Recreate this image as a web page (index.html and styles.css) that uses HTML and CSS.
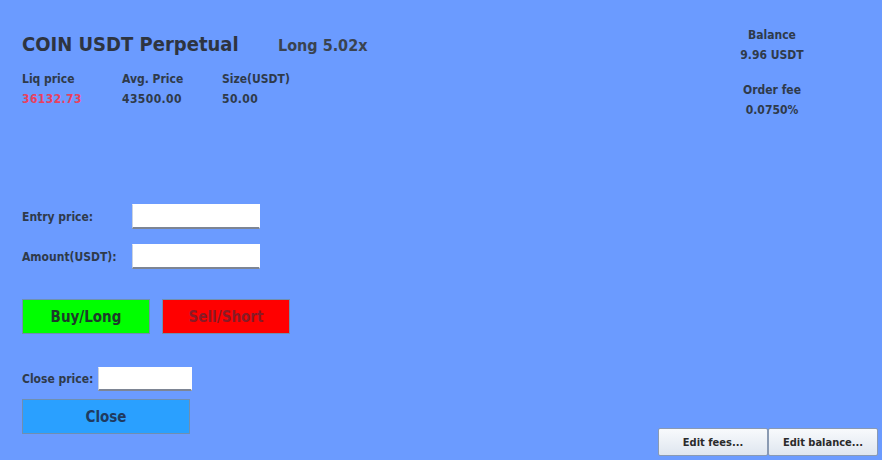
FILE: index.html
```html
<!DOCTYPE html>
<html>
<head>
<meta charset="utf-8">
<link rel="stylesheet" href="styles.css">
</head>
<body>
<div class="app">
  <header class="top">
    <div class="pos">
      <div class="title-row">
        <h1 class="title">COIN USDT Perpetual</h1>
        <span class="side">Long 5.02x</span>
      </div>
      <div class="stats">
        <div class="stat"><div class="lbl">Liq price</div><div class="val liq">36132.73</div></div>
        <div class="stat"><div class="lbl">Avg. Price</div><div class="val">43500.00</div></div>
        <div class="stat"><div class="lbl">Size(USDT)</div><div class="val">50.00</div></div>
      </div>
    </div>
    <aside class="account">
      <div class="acc-item"><div class="lbl">Balance</div><div class="val">9.96 USDT</div></div>
      <div class="acc-item fee"><div class="lbl">Order fee</div><div class="val">0.0750%</div></div>
    </aside>
  </header>

  <section class="order">
    <div class="field"><label class="flabel">Entry price:</label><input class="inp" type="text"></div>
    <div class="field"><label class="flabel">Amount(USDT):</label><input class="inp" type="text"></div>
    <div class="actions">
      <button class="btn buy">Buy/Long</button>
      <button class="btn sell">Sell/Short</button>
    </div>
  </section>

  <div class="bottom">
    <section class="closing">
      <div class="close-field"><label class="flabel">Close price:</label><input class="inp small" type="text"></div>
      <button class="btn close">Close</button>
    </section>
    <footer class="edit">
      <button class="ebtn">Edit fees...</button>
      <button class="ebtn">Edit balance...</button>
    </footer>
  </div>
</div>
</body>
</html>
```

FILE: styles.css
```css
html, body {
  margin: 0;
  padding: 0;
}
body {
  background: #6b9bff;
  width: 882px;
  height: 460px;
  overflow: hidden;
  font-family: "DejaVu Sans Condensed", "DejaVu Sans", sans-serif;
  font-weight: bold;
  color: #2f3a4a;
}
.app {
  padding: 0 0 0 22px;
  height: 460px;
  box-sizing: border-box;
  display: flex;
  flex-direction: column;
}
.top {
  display: flex;
  justify-content: space-between;
  padding-top: 31px;
}
.title-row {
  display: flex;
  align-items: baseline;
  height: 26px;
}
.title {
  margin: 0;
  font-size: 20px;
  line-height: 26px;
  color: #2e3440;
  width: 256px;
}
.side {
  font-size: 16px;
  color: #3a4350;
}
.stats {
  display: flex;
  margin-top: 12px;
}
.stat {
  width: 100px;
}
.lbl, .val {
  font-size: 12px;
  line-height: 20px;
}
.stat .val {
  letter-spacing: 0.4px;
}
.liq {
  color: #e8405f;
}
.account {
  width: 100px;
  margin-right: 60px;
  margin-top: -6px;
  text-align: center;
}
.fee {
  margin-top: 15px;
}
.order {
  margin-top: 84px;
}
.field {
  display: flex;
  align-items: center;
  height: 25px;
  margin-bottom: 15px;
}
.flabel {
  font-size: 12px;
  width: 110px;
}
.inp {
  width: 128px;
  height: 25px;
  box-sizing: border-box;
  border: 1px solid #ffffff;
  border-bottom: 2px solid #7d8594;
  border-left: 1px solid #c9d2e0;
  background: #fff;
  margin: 0;
  padding: 0;
}
.actions {
  display: flex;
  gap: 12px;
  margin-top: 30px;
}
.btn {
  font-family: "DejaVu Sans Condensed", "DejaVu Sans", sans-serif;
  font-weight: bold;
  font-size: 15px;
  height: 35px;
  box-sizing: border-box;
  border: 1px solid #6f8fb0;
  padding: 0;
  margin: 0;
}
.buy {
  width: 128px;
  background: #00ff00;
  color: #1d3a2a;
}
.sell {
  width: 128px;
  background: #ff0000;
  color: #8a1a25;
}
.bottom {
  display: flex;
  justify-content: space-between;
  align-items: flex-end;
  margin-top: 33px;
}
.close-field {
  display: flex;
  align-items: center;
  height: 24px;
}
.close-field .flabel {
  width: 76px;
}
.inp.small {
  width: 94px;
  height: 24px;
}
.close {
  display: block;
  margin-top: 8px;
  width: 168px;
  background: #2aa0ff;
  color: #1f3a60;
  margin-bottom: 24px;
}
.edit {
  display: flex;
  margin-right: 4px;
  margin-bottom: 2px;
}
.ebtn {
  font-family: "DejaVu Sans Condensed", "DejaVu Sans", sans-serif;
  font-weight: bold;
  font-size: 11px;
  color: #2a2a2a;
  width: 110px;
  height: 28px;
  box-sizing: border-box;
  border: 1px solid #8a9ab2;
  border-radius: 2px;
  background: linear-gradient(#f8fafc, #dfe6ef);
  margin: 0;
  padding: 0;
}
```
